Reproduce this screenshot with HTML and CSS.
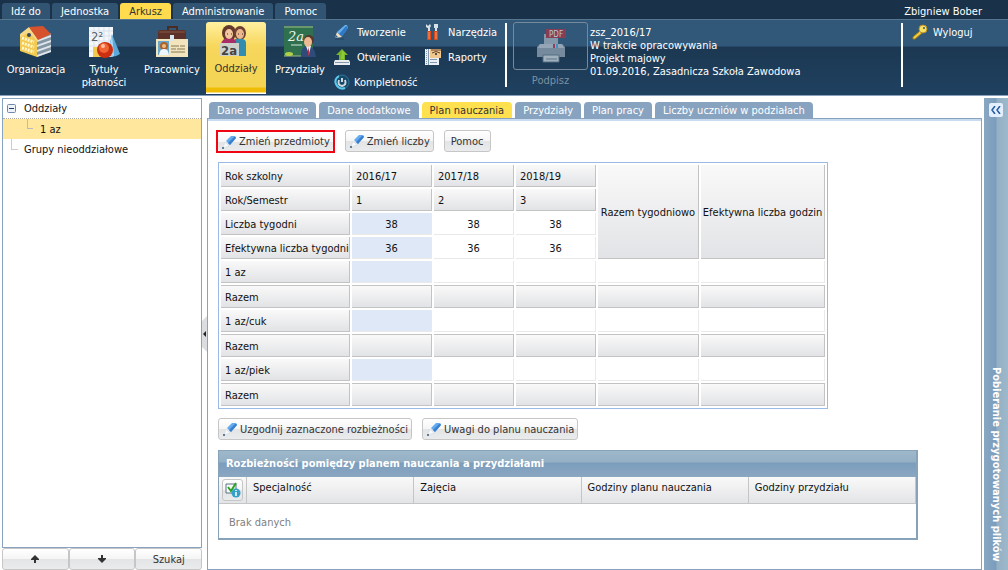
FILE: index.html
```
<!DOCTYPE html>
<html lang="pl">
<head>
<meta charset="utf-8">
<title>Arkusz</title>
<link rel="stylesheet" href="styles.css">
</head>
<body>
<svg class="defs" aria-hidden="true">
  <symbol id="pencil" viewBox="0 0 16 16">
    <path d="M2 14l2-6 4 4z" fill="#f7f9fb" stroke="#cbd6e0" stroke-width=".5"/><circle cx="2" cy="14" r="1" fill="#3d5878"/>
    <path d="M5 7l5-5h3l2 2-6 7z" fill="#62abee"/><path d="M7 9l7-7 1 2-6 7z" fill="#3b7fd0"/>
  </symbol>
  <symbol id="pencil-large" viewBox="0 0 16 16">
    <path d="M1 14l2-6 5 5z" fill="#efe3c3"/><path d="M1 14l1-3 2 2z" fill="#315f94"/>
    <path d="M3 8l8-7h2l1 3-6 8z" fill="#67b0ee"/><path d="M5 10l7-8 2 2-6 8z" fill="#2f78c9"/><path d="M1 15h9" stroke="#244563"/>
  </symbol>
</svg>
<header class="header">
  <div class="menubar">
    <nav class="menu">
      <button class="menu-tab">Idź do</button><button class="menu-tab">Jednostka</button><button class="menu-tab active">Arkusz</button><button class="menu-tab">Administrowanie</button><button class="menu-tab">Pomoc</button>
    </nav>
    <span class="user">Zbigniew Bober</span>
  </div>
  <div class="ribbon">
    <div class="large">
      <button class="big">
        <svg viewBox="0 0 32 32"><path d="M17 11l14-4v19l-14 5z" fill="#8495a3"/><path d="M17 14l14-5v2l-14 5zm0 5l14-5v2l-14 5zm0 5l14-5v2l-14 5zm0 5l14-5v2l-14 5z" fill="#dfe6ec"/><path d="M0 9l8-3 9 8v17L0 25z" fill="#f3ca50"/><path d="M0 8L9 1l10 13-2 1-8-8-9 4z" fill="#f6d889"/><path d="M9 1l14-1 8 8-13 6z" fill="#d6522c"/><path d="M2 12l12 4M2 17l12 4M2 22l12 4" stroke="#fff6ce" stroke-width="3" stroke-dasharray="2 1"/><circle cx="9" cy="9" r="2" fill="#394a58"/></svg>
        <span>Organizacja</span></button>
      <button class="big">
        <svg viewBox="0 0 32 32"><path d="M1 1h24v30H1z" fill="#f5f8fb"/><path d="M1 5h24M1 10h24M1 15h24M1 20h24M1 25h24M6 1v30M11 1v30M16 1v30M21 1v30" stroke="#d9e1e9"/><text x="3" y="15" class="math">2²</text><path d="M5 21h8v10H5z" fill="#f0c94d"/><path d="M24 8l8 20q-7 5-13 1z" fill="#5ba9db"/><path d="M24 8l2 22-6-1z" fill="#a9daf4"/><circle cx="17" cy="24" r="8" fill="#c92f10"/><circle cx="16" cy="22" r="5" fill="#ef6535"/><circle cx="15" cy="20" r="2" fill="#ffc0a0"/></svg>
        <span>Tytuły<br>płatności</span></button>
      <button class="big">
        <svg viewBox="0 0 32 32"><path d="M12 5V1h9v4" fill="none" stroke="#4a2c25" stroke-width="2"/><rect x="2" y="4" width="28" height="18" rx="2" fill="#5b3129"/><path d="M3 6h26" stroke="#8e5a46"/><rect y="13" width="32" height="18" fill="#f2e4bd"/><rect x="2" y="15" width="11" height="14" fill="#68a8cb"/><circle cx="8" cy="20" r="4" fill="#a9642c"/><circle cx="8" cy="20" r="2" fill="#f0bc83"/><path d="M3 29q1-7 5-6 4-1 5 6z" fill="#eef5fb"/><path d="M15 20h8m1 0h5M15 23h5m1 0h8M15 26h14" stroke="#857853"/><rect x="14" y="9" width="4" height="6" fill="#d8e8f3"/></svg>
        <span>Pracownicy</span></button>
      <button class="big active">
        <svg viewBox="0 0 32 32"><ellipse cx="9" cy="8" rx="7" ry="8" fill="#65382c"/><ellipse cx="20" cy="8" rx="6" ry="7" fill="#704034"/><path d="M15 14q11-2 11 4v13H15z" fill="#338cae"/><path d="M1 19q1-6 8-6 8 0 7 6z" fill="#a72d67"/><ellipse cx="9" cy="9" rx="4" ry="5" fill="#f3c79f"/><ellipse cx="20" cy="9" rx="4" ry="5" fill="#ebb78c"/><path d="M7 9h1m3 0h1m6 0h1m3 0h1" stroke="#4b2c22"/><rect y="18" width="19" height="13" fill="#ced1c9"/><text x="1" y="30" class="class-name">2a</text></svg>
        <span>Oddziały</span></button>
      <button class="big">
        <svg viewBox="0 0 32 32"><rect width="29" height="30" fill="#2f704e"/><path d="M0 30h29M0 1h29" stroke="#a5bc8a"/><text x="4" y="15" class="chalk">2a</text><path d="M7 19h11" stroke="#d3e6d8"/><ellipse cx="5" cy="28" rx="4" ry="2" fill="#b2cf4b"/><path d="M17 31q-1-10 6-11 8 0 9 11z" fill="#2f4b7b"/><path d="M22 20h5l-2 8z" fill="#eef4fc"/><path d="M24 21l2 7-2 2z" fill="#b43545"/><circle cx="25" cy="14" r="5" fill="#56382e"/><ellipse cx="24" cy="16" rx="4" ry="5" fill="#eeba91"/></svg>
        <span>Przydziały</span></button>
    </div>
    <div class="small">
      <button class="tool"><svg viewBox="0 0 16 16"><use href="#pencil-large"/></svg>Tworzenie</button>
      <button class="tool"><svg viewBox="0 0 16 16"><path d="M4 8V4M11 8V4" stroke="#d9e2e8" stroke-width="2"/><path d="M1 0l2 2 2-2 1 2-2 3L1 3zm8 0h4v4H9z" fill="#d9e2e8"/><path d="M2 7h4v9H2zm7 0h4v9H9z" fill="#d8471e"/><path d="M4 8v7m7-7v7" stroke="#ff9f5b"/></svg>Narzędzia</button>
      <button class="tool"><svg viewBox="0 0 16 16"><path d="M8 0l6 6h-3v5H5V6H2z" fill="#78b629"/><path d="M8 1l4 4h-2v5H7z" fill="#8fca38"/><path d="M1 11h14l1 2v3H0v-3z" fill="#e7edf1"/><path d="M1 13.500h14" stroke="#8398a8"/></svg>Otwieranie</button>
      <button class="tool report"><svg viewBox="0 0 16 16"><path d="M0 0h14v16H0z" fill="#eaf0f5"/><path d="M1.500 0v16" stroke="#8097ad" stroke-dasharray="1 1"/><path d="M3.500 0v16M5 10.500h7M5 13.500h7" stroke="#8097ad"/><path d="M5 0h11v9H5z" fill="#f0c88f"/><path d="M6 1h10M7 4q4-3 8 0" stroke="#643e27" fill="none"/><circle cx="11" cy="5" r="1" fill="#1f2931"/></svg>Raporty</button>
      <button class="tool complete"><svg viewBox="0 0 16 16"><circle cx="8" cy="8" r="7" fill="#164868" stroke="#2c789f" stroke-width="1"/><path d="M5 2q-5 3-3 8 3 6 9 4" fill="none" stroke="#5bc9ed" stroke-width="2"/><path d="M5 6q-2 5 3 6 5-1 3-6M8 4v4" fill="none" stroke="#cfd9df" stroke-width="2"/></svg>Kompletność</button>
    </div>
    <div class="divider"></div>
    <div class="sign">
      <button class="pdf" aria-label="Podpisz PDF" disabled>
        <svg viewBox="0 0 30 34"><path d="M8 5h14v13H8z" fill="#8398aa"/><path d="M4 15h22l3 3v10H1V18z" fill="#758b9d"/><path d="M4 15h22l2 4H2z" fill="#94a6b5"/><path d="M7 26h16v7H7z" fill="#a2b1bd" stroke="#536e83"/><path d="M10 30h11" stroke="#5d788e"/><path d="M17 15h2v4h-2z" fill="#963e58"/><path d="M20 15h2v4h-2z" fill="#3f92c2"/><rect x="10" width="20" height="9" fill="#873d55"/><text x="13" y="8" class="pdf-text">PDF</text></svg>
      </button>
      <span>Podpisz</span>
    </div>
    <div class="info">zsz_2016/17<br>W trakcie opracowywania<br>Projekt majowy<br>01.09.2016, Zasadnicza Szkoła Zawodowa</div>
    <div class="divider"></div>
    <button class="tool logout"><svg viewBox="0 0 16 16"><path d="M8 7l2 2-7 6H1v-2z" fill="#f0cf3b" stroke="#a67e17"/><circle cx="11" cy="5" r="4" fill="#f5df65" stroke="#b58d24"/><circle cx="12" cy="4" r="1" fill="#315779"/></svg>Wyloguj</button>
  </div>
</header>
<main class="workspace">
  <aside class="sidebar">
    <ul class="tree">
      <li class="node root"><svg viewBox="0 0 9 9"><rect x=".5" y=".5" width="8" height="8" rx="1" fill="#edf2f9" stroke="#7089aa"/><path d="M2 4.500h5" stroke="#1f3d70"/></svg>Oddziały</li>
      <li class="node selected">1 az</li>
      <li class="node leaf">Grupy nieoddziałowe</li>
    </ul>
    <div class="tree-buttons">
      <button class="btn" aria-label="W górę"><svg viewBox="0 0 8 8"><path d="M4 0l4 4v1H5v3H3V5H0V4z" fill="#333"/></svg></button>
      <button class="btn" aria-label="W dół"><svg viewBox="0 0 8 8"><path d="M4 8l4-4V3H5V0H3v3H0v1z" fill="#333"/></svg></button>
      <button class="btn">Szukaj</button>
    </div>
  </aside>
  <div class="splitter"><button aria-label="Zwiń panel"><svg viewBox="0 0 5 36"><path d="M5 0v36L0 31V5z" fill="#dcdde0"/><path d="M4 15v6l-3-3z" fill="#222"/></svg></button></div>
  <section class="content">
    <nav class="tabs">
      <button class="tab">Dane podstawowe</button><button class="tab">Dane dodatkowe</button><button class="tab active">Plan nauczania</button><button class="tab">Przydziały</button><button class="tab">Plan pracy</button><button class="tab">Liczby uczniów w podziałach</button>
    </nav>
    <div class="panel">
      <div class="toolbar">
        <span class="marked"><button class="btn"><svg viewBox="0 0 16 16"><use href="#pencil"/></svg>Zmień przedmioty</button></span>
        <button class="btn"><svg viewBox="0 0 16 16"><use href="#pencil"/></svg>Zmień liczby</button>
        <button class="btn plain">Pomoc</button>
      </div>
      <table class="plan">
        <colgroup><col class="c-label"><col class="c-year"><col class="c-year"><col class="c-year"><col class="c-total"><col class="c-effective"></colgroup>
        <tbody>
        <tr><th>Rok szkolny</th><th>2016/17</th><th>2017/18</th><th>2018/19</th><th rowspan="4" class="center">Razem tygodniowo</th><th rowspan="4" class="center">Efektywna liczba godzin</th></tr>
        <tr><th>Rok/Semestr</th><th>1</th><th>2</th><th>3</th></tr>
        <tr><th>Liczba tygodni</th><td class="current">38</td><td>38</td><td>38</td></tr>
        <tr><th>Efektywna liczba tygodni</th><td class="current">36</td><td>36</td><td>36</td></tr>
        <tr><th>1 az</th><td class="current"></td><td></td><td></td><td></td><td></td></tr>
        <tr class="sum"><th>Razem</th><td></td><td></td><td></td><td></td><td></td></tr>
        <tr><th>1 az/cuk</th><td class="current"></td><td></td><td></td><td></td><td></td></tr>
        <tr class="sum"><th>Razem</th><td></td><td></td><td></td><td></td><td></td></tr>
        <tr><th>1 az/piek</th><td class="current"></td><td></td><td></td><td></td><td></td></tr>
        <tr class="sum"><th>Razem</th><td></td><td></td><td></td><td></td><td></td></tr>
        </tbody>
      </table>
      <div class="toolbar lower">
        <button class="btn"><svg viewBox="0 0 16 16"><use href="#pencil"/></svg>Uzgodnij zaznaczone rozbieżności</button>
        <button class="btn"><svg viewBox="0 0 16 16"><use href="#pencil"/></svg>Uwagi do planu nauczania</button>
      </div>
      <section class="diff">
        <h2>Rozbieżności pomiędzy planem nauczania a przydziałami</h2>
        <table>
          <colgroup><col class="c-check"><col class="c-data"><col class="c-data"><col class="c-data"><col class="c-data"></colgroup>
          <thead><tr><th class="check"><button class="btn" aria-label="Zaznacz wszystko"><svg viewBox="0 0 16 16"><path d="M1 2h10v9H1z" fill="#f8fafc" stroke="#587387"/><path d="M3 5l3 4 5-8" fill="none" stroke="#2da21f" stroke-width="2"/><circle cx="11" cy="11" r="4.500" fill="#35a0c8"/><path d="M11 8v1m0 1v4" stroke="#fff" stroke-width="1.500"/></svg></button></th><th>Specjalność</th><th>Zajęcia</th><th>Godziny planu nauczania</th><th>Godziny przydziału</th></tr></thead>
          <tbody><tr><td colspan="5">Brak danych</td></tr></tbody>
        </table>
      </section>
    </div>
  </section>
  <aside class="files">
    <button aria-label="Rozwiń"><svg viewBox="0 0 10 8"><path d="M4 0L1 4l3 4M9 0L6 4l3 4" fill="none" stroke="#225a9b" stroke-width="1.500"/></svg></button>
    <span>Pobieranie przygotowanych plików</span>
  </aside>
</main>
</body>
</html>
```

FILE: styles.css
```
* { box-sizing: border-box; }
body { margin: 0; height: 100vh; min-height: 570px; display: flex; flex-direction: column; background: #fff; color: #111; font: 11px/13px "DejaVu Sans Condensed", "DejaVu Sans", sans-serif; }
button { font: inherit; color: inherit; margin: 0; padding: 0; border: 0; background: none; white-space: nowrap; }
svg { display: block; flex: none; }
.defs { position: absolute; width: 0; height: 0; }

.header { color: #fff; border-bottom: 1px solid #88a0bc; }
.menubar { display: flex; justify-content: space-between; align-items: end; height: 19px; background: #1a3249; }
.menu { display: flex; gap: 2px; padding-left: 2px; }
.menu-tab { height: 16px; padding: 0 9px; border-radius: 3px 3px 0 0; background: #315472; }
.menu-tab.active { background: #ffdb4d; color: #333; }
.user { padding: 0 26px 1px 0; }
.ribbon { display: flex; align-items: flex-start; height: 76px; border-top: 1px solid #56758f; background: linear-gradient(#315779 0, #315779 26px, #1c3852 27px, #1f4160 100%); }
.large { display: flex; padding: 2px 0 0 2px; }
.big { display: flex; flex-direction: column; align-items: center; gap: 5px; width: 68px; height: 72px; padding-top: 4px; border-radius: 3px 3px 0 0; }
.big:last-child { width: 60px; }
.big svg { width: 32px; height: 32px; }
.big.active { width: 60px; margin-right: 4px; padding-top: 3px; background: linear-gradient(#fff0a0, #f7d75c 24px, #f4d452 65px, #efbd05 66px, #efbd05 70px, #fff 71px); color: #333; }
.math { font: 13px "DejaVu Sans Condensed", sans-serif; fill: #59636b; }
.class-name { font: bold 13px "DejaVu Sans Condensed", sans-serif; fill: #444; }
.chalk { font: italic 13px "DejaVu Serif", serif; fill: #eef7ef; }
.small { display: grid; grid-template-columns: 91px 76px; grid-auto-rows: 25px; padding-left: 4px; }
.tool { display: flex; align-items: center; gap: 7px; height: 24px; }
.tool svg { width: 16px; height: 16px; }
.complete { gap: 4px; }
.divider { width: 2px; height: 64px; margin: 3px 6px 0 4px; background: #fff; }
.sign { display: flex; flex-direction: column; align-items: center; gap: 4px; padding-top: 2px; color: #7f91a1; }
.pdf { display: flex; align-items: center; justify-content: center; width: 75px; height: 48px; border: 1px solid #75899b; border-radius: 3px; }
.pdf svg { width: 30px; height: 34px; }
.pdf-text { font: 8px "DejaVu Sans Condensed", sans-serif; fill: #bdc7d0; }
.info { flex: 1; padding: 6px 0 0 2px; }
.logout { width: 99px; gap: 5px; padding-left: 3px; }

.workspace { flex: 1; display: flex; min-height: 0; padding: 2px 0 0 2px; }
.sidebar { display: flex; flex-direction: column; width: 200px; }
.tree { flex: 1; margin: 0; padding: 0; border: 1px solid #88a3bf; list-style: none; }
.node { display: flex; align-items: center; height: 20px; padding-left: 21px; }
.root { padding-left: 4px; gap: 8px; border-bottom: 1px dotted #aaa; }
.root svg { width: 9px; height: 9px; }
.selected { padding-left: 37px; background: linear-gradient(#bbb, #bbb) 24px 9px / 6px 1px no-repeat, linear-gradient(#bbb, #bbb) 24px 0 / 1px 9px no-repeat, #ffe79e; }
.leaf { background: linear-gradient(#ccc, #ccc) 8px 10px / 7px 1px no-repeat, linear-gradient(#ccc, #ccc) 8px 0 / 1px 10px no-repeat; }
.tree-buttons { display: flex; height: 22px; }
.btn { display: inline-flex; align-items: center; justify-content: center; gap: 2px; height: 22px; padding: 0 6px; border: 1px solid #c6c6c6; border-radius: 3px; background: linear-gradient(#fff, #f5f5f5 50%, #e3e4e5 51%, #eaebec); color: #333; }
.btn svg { width: 16px; height: 16px; }
.tree-buttons .btn { flex: 1; }
.tree-buttons svg { width: 8px; height: 8px; }
.splitter { display: flex; align-items: center; width: 5px; }
.splitter svg { width: 5px; height: 36px; }

.content { flex: 1; display: flex; flex-direction: column; min-width: 0; padding-top: 4px; }
.tabs { display: flex; gap: 3px; padding-left: 2px; }
.tab { height: 16px; padding: 0 8px; border-radius: 4px 4px 0 0; background: #88a3bf; color: #fff; }
.tab.active { background: #ffe04f; color: #333; }
.panel { flex: 1; border: 1px solid #88a3bf; box-shadow: inset 0 2px #c9dcef; padding: 11px 10px 0; }
.toolbar { display: flex; gap: 10px; height: 22px; }
.marked { display: flex; margin-left: -2px; border: 2px solid #f00612; height: 23px; }
.marked .btn { height: 19px; border: 0; }
.toolbar .btn { padding: 0 3px; }
.toolbar .plain { padding: 0 6px; }
.plan { width: 610px; margin-top: 10px; table-layout: fixed; border: 1px solid #99bbe8; border-spacing: 2px; }
.c-label { width: 129px; }
.c-year { width: 80px; }
.c-total { width: 101px; }
.plan th, .plan td { height: 22px; padding: 2px 0 0 4px; font-weight: normal; white-space: nowrap; text-align: left; border-right: 1px solid #e9e9e9; border-bottom: 1px solid #e9e9e9; }
.plan th, .plan .sum td { background: linear-gradient(#f9f9f9, #e2e3e6); border-color: #c3c3c3; }
.plan .sum th, .plan .sum td { height: 23px; border-top: 1px solid #c3c3c3; }
.plan td, .plan .center { padding: 2px 0 0; text-align: center; }
.plan .current { background: #dfe8f6; }
.lower { margin-top: 9px; }
.diff { width: 700px; margin-top: 10px; border: 1px solid #88a3b9; border-width: 1px 2px 2px 1px; }
.diff h2 { margin: 0; height: 26px; padding: 6px 7px; font-size: 11px; line-height: 13px; color: #fff; background: linear-gradient(#9db8ca, #95b0c4 11px, #7b9dbd 12px, #8ba7c1); }
.diff table { width: 100%; table-layout: fixed; border-spacing: 0; }
.c-check { width: 28px; }
.diff th { height: 27px; padding: 4px 6px; font-weight: normal; text-align: left; vertical-align: top; border-right: 1px solid #c5c5c5; border-bottom: 1px solid #c5c5c5; background: linear-gradient(#f9f9f9, #e3e4e6); }
.diff .check { padding: 2px 3px; }
.check .btn { width: 21px; padding: 0; }
.diff td { height: 34px; padding: 2px 10px 0; color: #808080; }
.files { display: flex; flex-direction: column; align-items: center; justify-content: space-between; width: 24px; margin-left: 2px; padding: 5px 0 8px; background: linear-gradient(90deg, #88a7c1, #7b9dbd 12px, #95b0c4 13px, #9db8ca); color: #fff; }
.files button { display: flex; align-items: center; justify-content: center; width: 14px; height: 14px; border-radius: 2px; background: #e3efff; }
.files svg { width: 10px; height: 8px; }
.files span { writing-mode: vertical-rl; font-weight: bold; }
```
